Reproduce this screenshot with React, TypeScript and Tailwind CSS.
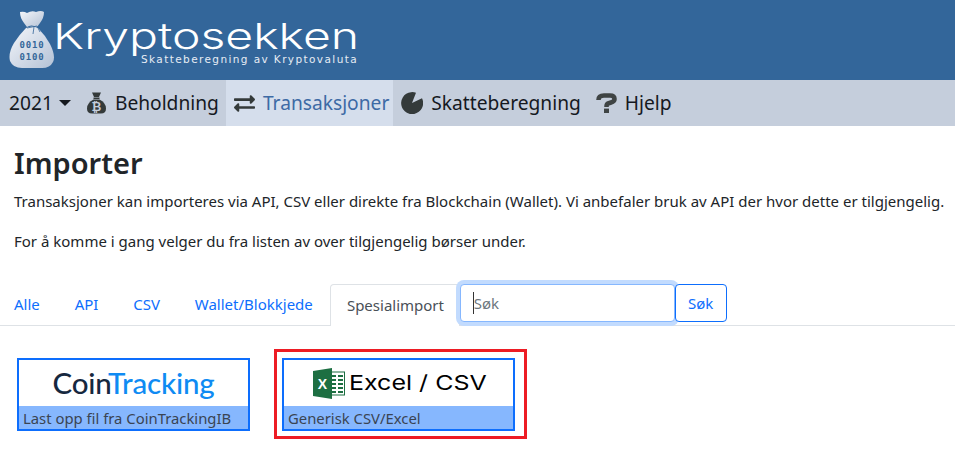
import React from "react";
import { FaExchangeAlt } from "react-icons/fa";

function BagLogo() {
  return (
    <svg width="46" height="58" viewBox="0 0 46 58" className="shrink-0">
      <defs>
        <linearGradient id="bg" x1="0" y1="0" x2="1" y2="1">
          <stop offset="0" stopColor="#f4f6fa" />
          <stop offset="1" stopColor="#b4c2d6" />
        </linearGradient>
      </defs>
      <path d="M11 2 Q15 1 18 3 Q23 0 27 2 Q32 0 35 2 Q35 8 31 13 L28 17 Q22 14 18 17 L15 13 Q11 8 11 2Z" fill="url(#bg)" />
      <path d="M17 18 Q23 15 29 18 Q36 25 41 34 Q47 46 44 52 Q41 58 33 58 L13 58 Q4 58 1 51 Q-1 43 5 33 Q10 25 17 18Z" fill="url(#bg)" />
      <path d="M18 18 L28 16 L31 22 M25 17 L24 24" stroke="#336699" strokeWidth="0.8" fill="none" />
      <text x="23" y="38" textAnchor="middle" fontFamily="'DejaVu Sans Mono', monospace" fontWeight="700" fontSize="9" fill="#336699" letterSpacing="0.8">0010</text>
      <text x="23" y="50" textAnchor="middle" fontFamily="'DejaVu Sans Mono', monospace" fontWeight="700" fontSize="9" fill="#336699" letterSpacing="0.8">0100</text>
    </svg>
  );
}

function MoneyBag() {
  return (
    <svg width="19" height="22" viewBox="0 0 19 22" className="shrink-0">
      <path d="M5 0.5 L14 0.5 L12 5 L7 5Z" fill="#343a3a" />
      <rect x="6.5" y="5.5" width="6" height="1.5" fill="#343a3a" />
      <path d="M6.5 7.6 L12.5 7.6 Q19 11 19 16.5 Q19 21.5 14 21.5 L5 21.5 Q0 21.5 0 16.5 Q0 11 6.5 7.6Z" fill="#343a3a" />
      <text x="9.5" y="18.5" textAnchor="middle" fontFamily="'Liberation Sans', sans-serif" fontWeight="700" fontSize="12" fill="#c5cedc">₿</text>
    </svg>
  );
}

function Pie() {
  return (
    <svg width="22" height="22" viewBox="0 0 22 22" className="shrink-0">
      <path d="M11 11 L21 6.2 A11 11 0 1 1 15 0.8Z" fill="#343a3a" />
    </svg>
  );
}

function Question() {
  return (
    <svg width="21" height="20" viewBox="0 0 21 20" className="ml-[2px] shrink-0">
      <path d="M2.5 7 Q2.5 2.5 8 2.5 L14 2.5 Q18.5 2.5 18.5 6 Q18.5 8.5 15 9.5 L12 10.5 Q10.5 11 10.5 14" stroke="#3f4444" strokeWidth="4.6" fill="none" />
      <rect x="8" y="15.6" width="5" height="4.4" fill="#3f4444" />
    </svg>
  );
}

function ExcelIcon() {
  return (
    <svg width="32" height="31" viewBox="0 0 32 31" className="shrink-0">
      <rect x="17" y="4" width="14.5" height="23" fill="#fff" stroke="#1d6f42" strokeWidth="1" />
      <path d="M19 8h4M25 8h5M19 12h4M25 12h5M19 16h4M25 16h5M19 20h4M25 20h5M19 24h4M25 24h5" stroke="#1d6f42" strokeWidth="2" />
      <path d="M0 3 L19 0 L19 31 L0 28Z" fill="#1d6f42" />
      <text x="9.5" y="20.5" textAnchor="middle" fontFamily="'Liberation Sans', sans-serif" fontWeight="700" fontSize="14" fill="#fff">X</text>
    </svg>
  );
}

function NavItem({ icon, label, className }: { icon: React.ReactNode; label: string; className: string }) {
  return (
    <a className={`flex h-full items-center pl-[8px] ${className}`}>
      {icon}
      <span>{label}</span>
    </a>
  );
}

function Tab({ label, active }: { label: string; active?: boolean }) {
  return (
    <a className={active
      ? "flex h-[42px] items-center rounded-t-[4px] border-x border-t border-[#dee2e6] bg-white pb-[1px] pl-[15.7px] pr-[14.7px] text-[#495057]"
      : "flex h-[41px] items-center px-[17.43px] pb-[1px] text-[#0d6efd]"}>
      {label}
    </a>
  );
}

function Card({ logo, caption }: { logo: React.ReactNode; caption: string }) {
  return (
    <div className="flex h-[73px] w-[233px] flex-col border-2 border-[#0d6efd] bg-white">
      <div className="flex h-[46px] items-center justify-center">{logo}</div>
      <div className="h-[23px] bg-[#86b7fe] pl-[4px] text-[14.85px] leading-[24px] text-[#3a4452]">{caption}</div>
    </div>
  );
}

export default function App() {
  return (
    <div className="h-[454px] w-[955px] overflow-hidden bg-white font-['Noto_Sans','Open_Sans',sans-serif] text-[#212529]">
      <header className="flex h-[80px] items-start bg-[#33669a] pl-[9px] pt-[10px]">
        <BagLogo />
        <div className="flex flex-col">
          <span className="-ml-[2px] mt-[9px] origin-left scale-x-[1.337] whitespace-nowrap font-['Inter',sans-serif] text-[36px] font-light leading-[34px] text-white">Kryptosekken</span>
          <span className="ml-[86px] whitespace-nowrap font-['DejaVu_Sans',sans-serif] text-[10.5px] leading-[12px] tracking-[1.4px] text-[#e6ecf4]">Skatteberegning av Kryptovaluta</span>
        </div>
      </header>
      <nav className="flex h-[46px] items-center bg-[#c5cedc] text-[19.2px]">
        <a className="flex h-full items-center gap-[6px] pl-[9px] pr-[8px] text-[#15191f]">
          2021
          <span className="h-0 w-0 border-x-[6.5px] border-t-[6.5px] border-x-transparent border-t-[#15191f]" />
        </a>
        <NavItem icon={<MoneyBag />} label="Beholdning" className="gap-[9px] pr-[7px] text-[#15191f]" />
        <NavItem icon={<FaExchangeAlt className="text-[#343a3a]" size={21} />} label="Transaksjoner" className="gap-[8px] bg-[#d5deec] pr-[4px] text-[#3d6aa5]" />
        <NavItem icon={<Pie />} label="Skatteberegning" className="gap-[8px] pr-[5px] text-[#15191f]" />
        <NavItem icon={<Question />} label="Hjelp" className="gap-[8px] pr-[5px] text-[#15191f]" />
      </nav>
      <main className="pt-[16px]">
        <div className="px-[14px]">
          <h1 className="text-[29px] font-semibold leading-[42px] text-[#212529]">Importer</h1>
          <p className="mt-[5px] whitespace-nowrap text-[15px] leading-[24px]">Transaksjoner kan importeres via API, CSV eller direkte fra Blockchain (Wallet). Vi anbefaler bruk av API der hvor dette er tilgjengelig.</p>
          <p className="mt-[16px] whitespace-nowrap text-[15px] leading-[24px]">For å komme i gang velger du fra listen av over tilgjengelig børser under.</p>
        </div>
        <div className="mt-[31px] flex h-[42px] items-start border-b border-[#dee2e6] text-[15px]">
          <div className="-ml-[3.43px] flex">
            <Tab label="Alle" />
            <Tab label="API" />
            <Tab label="CSV" />
            <Tab label="Wallet/Blokkjede" />
            <Tab label="Spesialimport" active />
          </div>
          <div className="flex">
            <div className="flex h-[38px] w-[215px] items-center rounded-[4px] border border-[#86b7fe] bg-white pl-[12px] text-[#6c757d] shadow-[0_0_0_4px_#c2dbfe]">
              <span className="h-[22px] w-px bg-[#333]" />
              <span>Søk</span>
            </div>
            <div className="flex h-[38px] w-[52px] items-center justify-center rounded-[4px] border border-[#0d6efd] bg-white text-[#0d6efd]">Søk</div>
          </div>
        </div>
        <div className="mt-[23px] flex items-start pl-[17px]">
          <div className="mt-[9px]">
            <Card
              logo={
                <span className="font-['Lato',sans-serif] text-[29.5px] font-medium leading-none tracking-[-0.2px]">
                  <span className="text-[#16283f]">Coin</span>
                  <span className="text-[#0f8bf3]">Tracking</span>
                </span>
              }
              caption="Last opp fil fra CoinTrackingIB"
            />
          </div>
          <div className="ml-[24px] border-[3px] border-[#ed1c24] pb-[5px] pl-[5px] pr-[9px] pt-[6px]">
            <Card
              logo={
                <span className="mt-[1px] flex items-center gap-[4px]">
                  <ExcelIcon />
                  <span className="w-[136px] origin-left scale-x-[1.22] whitespace-nowrap font-['Inter',sans-serif] text-[20.5px] font-normal leading-none text-black">Excel / CSV</span>
                </span>
              }
              caption="Generisk CSV/Excel"
            />
          </div>
        </div>
      </main>
    </div>
  );
}
